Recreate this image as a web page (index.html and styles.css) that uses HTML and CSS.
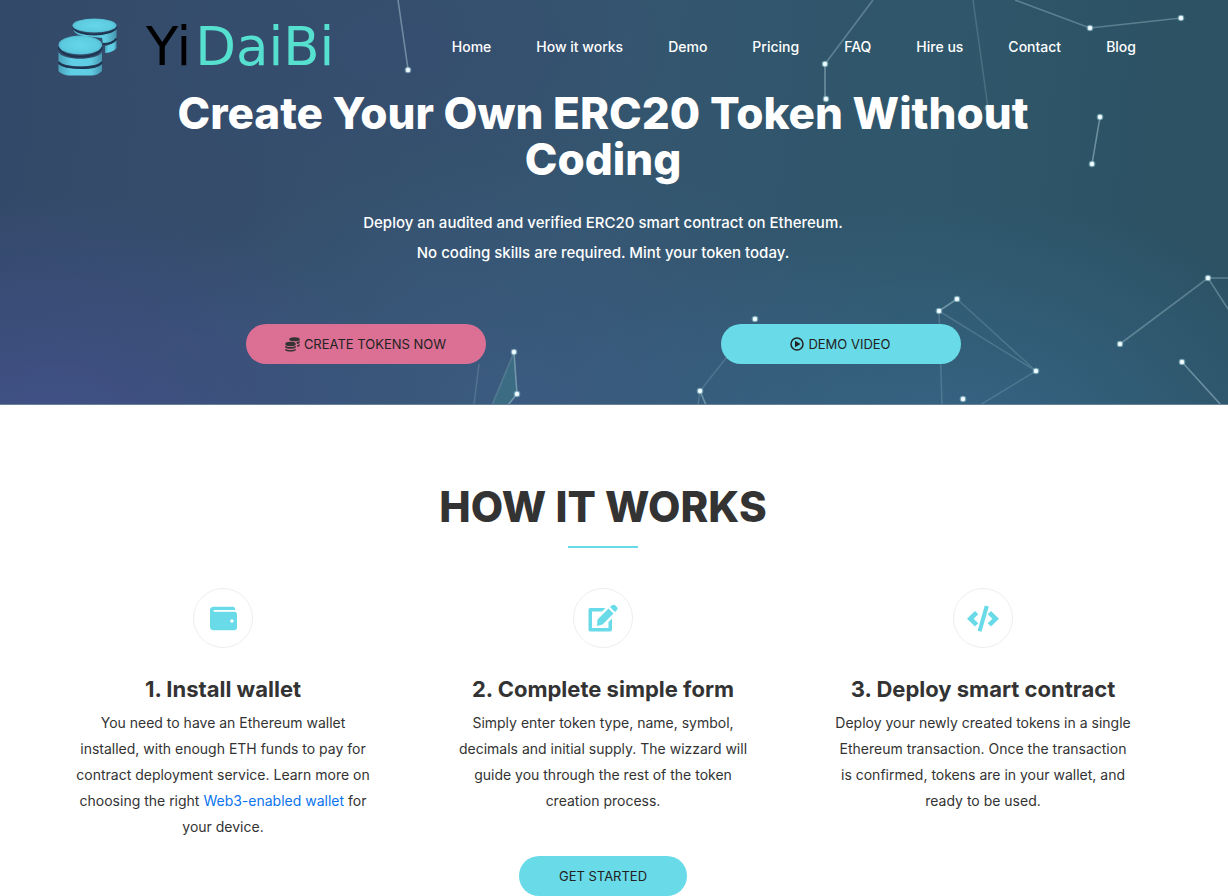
FILE: index.html
```html
<!DOCTYPE html>
<html lang="en">
<head>
<meta charset="utf-8">
<meta name="viewport" content="width=device-width, initial-scale=1">
<title>YiDaiBi – Create Your Own ERC20 Token</title>
<link rel="stylesheet" href="styles.css">
</head>
<body>
<header class="hero">
  <svg class="hero-net" viewBox="0 0 1228 405" preserveAspectRatio="xMidYMin slice" aria-hidden="true">
    <polygon points="514,352 517,394 508,405 492,405" fill="#3f8f90" opacity=".35"/>
    <g stroke="#a9c8d2" stroke-width="1.6" fill="none">
      <path opacity=".5" d="M398 0L408 69M825 64V99M1100 117L1092 164M514 352L517 394L508 405M1182 362L1221 405M700 391L706 405M939 311L957 299"/>
      <path opacity=".38" d="M873 0L825 64M1015 0L1090 28L1181 18M1228 278H1208L1120 344M1208 278L1228 309"/>
      <path opacity=".22" d="M973 0L988 108M939 311L1036 371L957 299M1036 371L980 405M939 311L942 405M700 391L727 357M698 405L700 391M479 364L474 405M514 352L492 405"/>
    </g>
    <g fill="#9cc9d4" opacity=".6">
      <circle cx="408" cy="70" r="3.3"/><circle cx="825" cy="64" r="3.3"/><circle cx="826" cy="99" r="3.3"/><circle cx="988" cy="108" r="3.3"/><circle cx="1090" cy="28" r="3.3"/><circle cx="1181" cy="18" r="3.3"/><circle cx="1100" cy="117" r="3.3"/><circle cx="1092" cy="164" r="3.3"/><circle cx="514" cy="352" r="3.3"/><circle cx="517" cy="394" r="3.3"/><circle cx="755" cy="319" r="3.3"/><circle cx="700" cy="391" r="3.3"/><circle cx="939" cy="311" r="3.3"/><circle cx="957" cy="299" r="3.3"/><circle cx="1036" cy="371" r="3.3"/><circle cx="963" cy="399" r="3.3"/><circle cx="1208" cy="278" r="3.3"/><circle cx="1120" cy="344" r="3.3"/><circle cx="1182" cy="362" r="3.3"/>
    </g>
    <g fill="#eefbff">
      <circle cx="408" cy="70" r="2.2"/><circle cx="825" cy="64" r="2.2"/><circle cx="826" cy="99" r="2.2"/><circle cx="1090" cy="28" r="2.2"/><circle cx="1181" cy="18" r="2.2"/><circle cx="1100" cy="117" r="2.2"/><circle cx="1092" cy="164" r="2.2"/><circle cx="514" cy="352" r="2.2"/><circle cx="517" cy="394" r="2.2"/><circle cx="755" cy="319" r="2.2"/><circle cx="700" cy="391" r="2.2"/><circle cx="939" cy="311" r="2.2"/><circle cx="957" cy="299" r="2.2"/><circle cx="1036" cy="371" r="2.2"/><circle cx="963" cy="399" r="2.2"/><circle cx="1208" cy="278" r="2.2"/><circle cx="1120" cy="344" r="2.2"/><circle cx="1182" cy="362" r="2.2"/>
    </g>
  </svg>
  <div class="container topbar">
    <a class="logo" href="#home">
      <svg class="logo-coins" viewBox="0 0 60 58" aria-hidden="true">
        <defs>
          <radialGradient id="coin" cx=".5" cy=".5" r=".6"><stop offset="0" stop-color="#66d6ea"/><stop offset=".7" stop-color="#5ccbe0"/><stop offset="1" stop-color="#4a9fb8"/></radialGradient>
          <linearGradient id="side" x1="0" x2="1"><stop offset="0" stop-color="#4ba3bd"/><stop offset=".3" stop-color="#60cfe6"/><stop offset=".75" stop-color="#5fcce2"/><stop offset="1" stop-color="#4796b0"/></linearGradient>
        </defs>
        <path fill="url(#side)" d="M15 11C20 17 53 18 58.500 11V20C56 24 50 26 45 26L44 20C34 18 17 20 15 11Z"/>
        <path fill="url(#side)" d="M47 28C52 27 56 25 58.500 22.500V30C56 33.500 51 35 47 35Z"/>
        <path d="M15 9C18 19 54 19 58.500 9M45 26C51 26 56 24 58.500 20.500" fill="none" stroke="#1d3550" stroke-width="2"/>
        <ellipse cx="36.500" cy="7.500" rx="22" ry="7" fill="url(#coin)"/>
        <path fill="url(#side)" d="M0.500 34C4 43 40 43 44 34V43C40 50 5 50 0.500 43Z"/>
        <path fill="url(#side)" d="M0.500 46C5 52 40 52 44 46V53C41 56 37 57.500 34 57.500H10C6 57 2 55 0.500 53Z"/>
        <path d="M0.500 29C4 42 40 42 44 29M0.500 44C5 52 40 52 44 44" fill="none" stroke="#1d3550" stroke-width="2"/>
        <ellipse cx="22.300" cy="27" rx="21.800" ry="9.500" fill="url(#coin)"/>
      </svg>
      <span class="logo-text"><span class="logo-dark">Yi</span><span>DaiBi</span></span>
    </a>
    <nav class="menu" aria-label="Main">
      <a href="#home">Home</a>
      <a href="#how">How it works</a>
      <a href="#demo">Demo</a>
      <a href="#pricing">Pricing</a>
      <a href="#faq">FAQ</a>
      <a href="#hire">Hire us</a>
      <a href="#contact">Contact</a>
      <a href="#blog">Blog</a>
    </nav>
  </div>
  <div class="pitch" id="home">
    <h1>Create Your Own ERC20 Token Without Coding</h1>
    <p>Deploy an audited and verified ERC20 smart contract on Ethereum.<br>No coding skills are required. Mint your token today.</p>
    <div class="actions">
      <a class="btn btn-pink" href="#create">
        <svg width="15" height="15" viewBox="0 0 60 60" aria-hidden="true"><g fill="#333"><ellipse cx="38" cy="9" rx="21" ry="8"/><path d="M46 20C52 19 56 18 59 15V22C56 26 52 28 48 28ZM49 33C53 32 56 30 59 28V34C57 38 53 39 49 40Z"/><ellipse cx="22" cy="28" rx="21" ry="9"/><path d="M1 35C8 42 36 42 43 35V42C38 49 6 49 1 42ZM1 47C8 54 36 54 43 47V53C38 60 6 60 1 53Z"/></g></svg>
        CREATE TOKENS NOW</a>
      <a class="btn" href="#demo">
        <svg width="14" height="14" viewBox="0 0 14 14" aria-hidden="true"><circle cx="7" cy="7" r="6" fill="none" stroke="#222" stroke-width="1.500"/><path d="M5 3.800L10.500 7L5 10.200Z" fill="#222"/></svg>
        DEMO VIDEO</a>
    </div>
  </div>
</header>
<main class="how" id="how">
  <h2>HOW IT WORKS</h2>
  <div class="container steps">
    <section class="step">
      <span class="step-icon"><svg width="27" height="27" viewBox="0 0 512 512" aria-hidden="true"><path fill="currentColor" d="M461.200 128H80c-8.840 0-16-7.160-16-16s7.160-16 16-16h384c8.840 0 16-7.160 16-16 0-26.510-21.490-48-48-48H64C28.650 32 0 60.650 0 96v320c0 35.350 28.650 64 64 64h397.200c28.020 0 50.800-21.530 50.800-48V176c0-26.470-22.780-48-50.800-48zM416 336c-17.670 0-32-14.330-32-32s14.330-32 32-32 32 14.330 32 32-14.330 32-32 32z"/></svg></span>
      <h3>1. Install wallet</h3>
      <p>You need to have an Ethereum wallet installed, with enough ETH funds to pay for contract deployment service. Learn more on choosing the right <a href="#wallet">Web3-enabled wallet</a> for your device.</p>
    </section>
    <section class="step">
      <span class="step-icon"><svg width="30" height="28" viewBox="0 0 30 28" aria-hidden="true"><path fill="currentColor" d="M2 4H17.500L14 7.500H4V24H20.500V18L24 14.500V25.500Q24 27.500 22 27.500H2Q0.500 27.500 0.500 25.500V6Q0.500 4 2 4ZM20.500 4.500L25.500 9.500L14.500 20.500L9 22L9.500 15.500ZM22 3L24 1.200Q26 0 27.500 1.400L29 3Q30.200 4.500 29 6L27 8Z"/></svg></span>
      <h3>2. Complete simple form</h3>
      <p>Simply enter token type, name, symbol, decimals and initial supply. The wizzard will guide you through the rest of the token creation process.</p>
    </section>
    <section class="step">
      <span class="step-icon"><svg width="32" height="28" viewBox="0 0 32 28" aria-hidden="true"><path fill="currentColor" d="M17.800 1.500L21.800 2.500L14.500 27.700L10.600 26.700ZM8 7L11.300 10.200L6.600 14.700L11.300 19.200L8 22.400L0 14.700ZM24 7L32 14.700L24 22.400L20.700 19.200L25.400 14.700L20.700 10.200Z"/></svg></span>
      <h3>3. Deploy smart contract</h3>
      <p>Deploy your newly created tokens in a single Ethereum transaction. Once the transaction is confirmed, tokens are in your wallet, and ready to be used.</p>
    </section>
  </div>
  <a class="btn btn-start" href="#start">GET STARTED</a>
</main>
</body>
</html>
```
FILE: styles.css
```css
* {
  box-sizing: border-box;
}

body {
  margin: 0;
  font-family: Inter, "Open Sans", sans-serif;
  font-size: 14px;
  color: #333;
  background: #fff;
}

a {
  color: #0a74ee;
  text-decoration: none;
}

h1,
h2,
h3,
p {
  margin: 0;
}

h1,
h2 {
  font-size: 42px;
  font-weight: 800;
  line-height: 46px;
}

h1 {
  font-size: 44px;
}

.container {
  width: 100%;
  max-width: 1140px;
  margin: 0 auto;
}

.hero {
  position: relative;
  padding: 0 22px 40px 0;
  color: #fff;
  border-bottom: 1px solid #6a8296;
  background:
    radial-gradient(ellipse 30% 60% at 4% 108%, rgba(68, 82, 142, 0.85), transparent),
    radial-gradient(ellipse 34% 60% at 78% 110%, rgba(56, 104, 140, 0.8), transparent),
    radial-gradient(ellipse 32% 60% at 42% 98%, rgba(60, 92, 132, 0.8), transparent),
    radial-gradient(ellipse 24% 40% at 33% 12%, rgba(54, 77, 112, 0.8), transparent),
    linear-gradient(95deg, #334969 0%, #354d6b 20%, #34566f 50%, #2f566a 75%, #2b5162 100%);
}

.hero-net {
  position: absolute;
  inset: 0;
  width: 100%;
  height: 100%;
}

.topbar {
  position: relative;
  display: flex;
  justify-content: space-between;
  align-items: center;
  height: 90px;
  padding: 4px 37px 0 25px;
}

.logo {
  display: flex;
  align-items: center;
  gap: 28px;
  color: #56e0cf;
}

.logo-coins {
  width: 60px;
  height: 58px;
}

.logo-text {
  display: flex;
  gap: 4px;
  font: 53px/60px "DejaVu Sans", sans-serif;
}

.logo-dark {
  color: #000;
}

.menu {
  display: flex;
  gap: 45px;
}

.menu a {
  color: #fff;
  font-size: 14px;
  font-weight: 500;
  line-height: 24px;
}

.pitch {
  position: relative;
  max-width: 950px;
  margin: 0 auto;
  text-align: center;
}

.pitch h1 {
  padding: 0 15px;
}

.pitch p {
  margin: 26px 0 56px;
  font-size: 15px;
  font-weight: 500;
  line-height: 30px;
}

.actions {
  display: grid;
  grid-template-columns: 1fr 1fr;
  justify-items: center;
}

.btn {
  display: flex;
  align-items: center;
  justify-content: center;
  gap: 4px;
  width: 240px;
  height: 40px;
  border-radius: 20px;
  color: #222;
  background: #69dbe8;
  font-size: 13px;
}

.btn-pink {
  background: #db7094;
}

.how {
  display: flex;
  flex-direction: column;
  align-items: center;
  padding: 79px 22px 0 0;
  text-align: center;
}

.how h2::after {
  content: "";
  display: block;
  width: 70px;
  height: 2px;
  margin: 16px auto 0;
  background: #69dbe8;
}

.steps {
  display: grid;
  grid-template-columns: repeat(3, 1fr);
  margin-top: 40px;
}

.step {
  padding: 0 40px;
}

.step-icon {
  display: flex;
  align-items: center;
  justify-content: center;
  width: 60px;
  height: 60px;
  margin: 0 auto;
  border: 1px solid #eee;
  border-radius: 50%;
  color: #69dbe8;
}

.step h3 {
  margin: 28px 0 8px;
  font-size: 22px;
  font-weight: 700;
  line-height: 26px;
}

.step p {
  font-size: 14px;
  line-height: 26px;
}

.btn-start {
  width: 168px;
  margin-top: 16px;
}
```
